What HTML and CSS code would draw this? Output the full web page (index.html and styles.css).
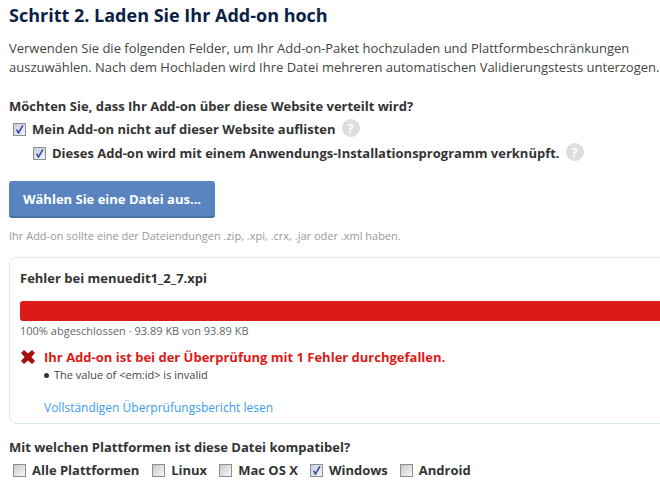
FILE: index.html
```html
<!DOCTYPE html>
<html lang="de">
<head>
  <meta charset="UTF-8" />
  <meta name="viewport" content="width=device-width, initial-scale=1.0" />
  <title>Schritt 2. Laden Sie Ihr Add-on hoch</title>
  <link rel="stylesheet" href="styles.css">
</head>
<body>
  <main class="page">
    <h2 class="step-title">Schritt 2. Laden Sie Ihr Add-on hoch</h2>
    <p class="intro">Verwenden Sie die folgenden Felder, um Ihr Add-on-Paket hochzuladen und Plattformbeschränkungen auszuwählen. Nach dem Hochladen wird Ihre Datei mehreren automatischen Validierungstests unterzogen.</p>

    <h3 class="question">Möchten Sie, dass Ihr Add-on über diese Website verteilt wird?</h3>
    <div class="option">
      <span class="box checked"><svg viewBox="0 0 9 9"><path d="M1.6 4.6 3.5 8 7.9 0.4" /></svg></span>
      <span>Mein Add-on nicht auf dieser Website auflisten</span>
      <span class="help">?</span>
    </div>
    <div class="option sub">
      <span class="box checked"><svg viewBox="0 0 9 9"><path d="M1.6 4.6 3.5 8 7.9 0.4" /></svg></span>
      <span>Dieses Add-on wird mit einem Anwendungs-Installationsprogramm verknüpft.</span>
      <span class="help">?</span>
    </div>

    <button class="upload-btn">Wählen Sie eine Datei aus...</button>
    <p class="hint">Ihr Add-on sollte eine der Dateiendungen .zip, .xpi, .crx, .jar oder .xml haben.</p>

    <section class="status-card">
      <h4 class="file-name">Fehler bei menuedit1_2_7.xpi</h4>
      <div class="progress"></div>
      <p class="progress-text">100% abgeschlossen · 93.89 KB von 93.89 KB</p>
      <div class="result">
        <svg class="x-icon" viewBox="0 0 14 14"><path d="M0 3 3 0 7 3.6 11 0 14 3 10.4 7 14 11 11 14 7 10.4 3 14 0 11 3.6 7Z" /></svg>
        <strong>Ihr Add-on ist bei der Überprüfung mit 1 Fehler durchgefallen.</strong>
      </div>
      <ul class="messages">
        <li>The value of &lt;em:id&gt; is invalid</li>
      </ul>
      <a class="report-link" href="#">Vollständigen Überprüfungsbericht lesen</a>
    </section>

    <h3 class="question platforms-title">Mit welchen Plattformen ist diese Datei kompatibel?</h3>
    <div class="platforms">
      <div class="platform"><span class="box"></span><span>Alle Plattformen</span></div>
      <div class="platform"><span class="box"></span><span>Linux</span></div>
      <div class="platform"><span class="box"></span><span>Mac OS X</span></div>
      <div class="platform"><span class="box checked"><svg viewBox="0 0 9 9"><path d="M1.6 4.6 3.5 8 7.9 0.4" /></svg></span><span>Windows</span></div>
      <div class="platform"><span class="box"></span><span>Android</span></div>
    </div>
  </main>
</body>
</html>
```

FILE: styles.css
```css
html, body {
  margin: 0;
  padding: 0;
  height: 491px;
  overflow: hidden;
  background: #fff;
}
body {
  font-family: "Open Sans", sans-serif;
  font-size: 13px;
  color: #333;
}
.page {
  padding: 4px 0 0 9px;
  width: 760px;
}
.step-title {
  margin: 0;
  font-size: 18px;
  line-height: 22px;
  font-weight: 700;
  color: #0c1f45;
}
.intro {
  margin: 13px 0 0;
  width: 660px;
  line-height: 19px;
  color: #444;
}
.question {
  margin: 20px 0 0;
  font-size: 13px;
  line-height: 18px;
  font-weight: 700;
  color: #333;
}
.option {
  display: flex;
  align-items: center;
  gap: 6px;
  margin-top: 4px;
  padding-left: 4px;
  height: 20px;
  font-weight: 700;
}
.option.sub {
  padding-left: 24px;
}
.box {
  flex: none;
  box-sizing: border-box;
  width: 13px;
  height: 13px;
  padding: 1px;
  border: 1px solid #8e8f8f;
  background: linear-gradient(135deg, #c9c9cc, #f8f8f8);
}
.box.checked {
  background: linear-gradient(135deg, #c6cbe0, #f4f5fa);
}
.box svg {
  display: block;
  width: 9px;
  height: 9px;
  fill: none;
  stroke: #3c4fa0;
  stroke-width: 1.6;
}
.help {
  width: 18px;
  height: 18px;
  margin: -3px 0 0 0;
  border-radius: 50%;
  background: #ddd;
  color: #fff;
  font-size: 13px;
  font-weight: 700;
  line-height: 18px;
  text-align: center;
}
.upload-btn {
  display: block;
  margin-top: 18px;
  width: 206px;
  height: 37px;
  padding: 0;
  border: 0;
  border-bottom: 2px solid #4a70a8;
  border-radius: 3px;
  background: #5a84bf;
  color: #fff;
  font-family: inherit;
  font-size: 13px;
  font-weight: 700;
}
.hint {
  margin: 10px 0 0;
  font-size: 11px;
  line-height: 15px;
  color: #999;
}
.status-card {
  box-sizing: border-box;
  margin-top: 14px;
  height: 167px;
  padding: 11px 10px 0;
  border: 1px solid #d8e9f1;
  border-radius: 8px;
}
.file-name {
  margin: 0;
  font-size: 13px;
  line-height: 18px;
  font-weight: 700;
}
.progress {
  margin-top: 14px;
  height: 20px;
  border-radius: 3px;
  background: #dc1a17;
}
.progress-text {
  margin: 2px 0 0;
  font-size: 11px;
  line-height: 15px;
  color: #666;
}
.result {
  display: flex;
  align-items: center;
  gap: 9px;
  margin-top: 10px;
  font-size: 13px;
  line-height: 18px;
  color: #dc1a17;
}
.x-icon {
  width: 14px;
  height: 14px;
  margin-left: 1px;
  fill: #a51010;
}
.messages {
  margin: 1px 0 0;
  padding: 0 0 0 24px;
  list-style: none;
  font-size: 11px;
  line-height: 16px;
  color: #444;
}
.messages li {
  display: flex;
  align-items: center;
  gap: 5px;
}
.messages li::before {
  content: "";
  width: 5px;
  height: 5px;
  border-radius: 50%;
  background: #333;
}
.report-link {
  display: block;
  margin: 16px 0 0 24px;
  font-size: 12px;
  line-height: 18px;
  color: #3d9bf0;
  text-decoration: none;
}
.platforms-title {
  margin-top: 14px;
}
.platforms {
  display: flex;
  gap: 12px;
  margin-top: 4px;
  padding-left: 4px;
  font-weight: 700;
}
.platform {
  display: flex;
  align-items: center;
  gap: 6px;
  height: 20px;
}
.platform:first-child {
  margin-right: 1px;
}
```
